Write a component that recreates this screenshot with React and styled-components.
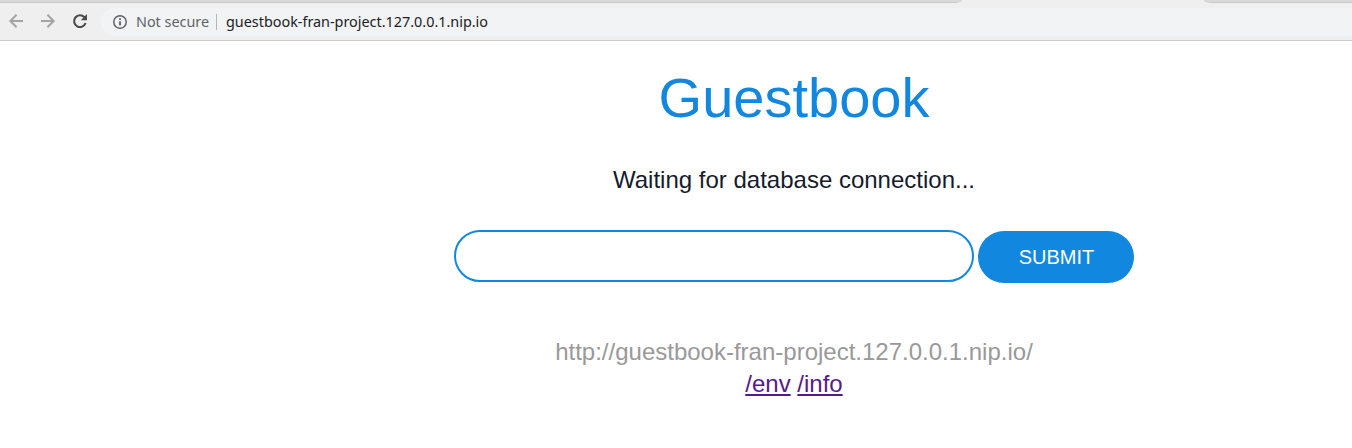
import React from "react";
import styled, { createGlobalStyle } from "styled-components";

const GlobalStyle = createGlobalStyle`
  *, *::before, *::after { box-sizing: border-box; }
  body { margin: 0; background: #fff; overflow: hidden; }
`;

/* The browser window is wider than the visible viewport. */
const Viewport = styled.div`
  width: 100%;
  height: 448px;
  overflow: hidden;
`;

const Window = styled.div`
  width: 1588px;
  font-family: "Liberation Sans", Arial, sans-serif;
`;

const TabStrip = styled.div`
  display: flex;
  height: 3px;
  background: #efefef;
`;

const InactiveTabs = styled.div`
  width: ${(p) => p.$width};
  flex: ${(p) => (p.$width ? "none" : 1)};
  background: #d9d9d9;
  border-bottom: 1px solid #c9c9c9;
  border-radius: ${(p) => (p.$side === "left" ? "0 0 8px 0 / 0 0 3px 0" : "0 0 0 8px / 0 0 0 3px")};
`;

const ActiveTab = styled.div`
  width: 242px;
`;

const Toolbar = styled.div`
  display: flex;
  align-items: flex-start;
  height: 38px;
  padding: 5px 0 0 8px;
  background: #efefef;
  border-bottom: 1px solid #cacaca;
`;

const NavButton = styled.span`
  display: flex;
  width: 16px;
  height: 16px;
  margin: 5px 16px 0 0;
  color: ${(p) => (p.$enabled ? "#4b4b4b" : "#a5a5a5")};
`;

const AddressBar = styled.div`
  display: flex;
  align-items: center;
  flex: 1;
  height: 28px;
  margin-left: -3px;
  padding-left: 11px;
  border-radius: 14px 0 0 14px;
  background: #f1f3f4;
  font: 14.38px/20px "Noto Sans", sans-serif;
  white-space: nowrap;
`;

const Security = styled.span`
  display: flex;
  align-items: center;
  width: 105px;
  height: 16px;
  border-right: 1px solid #b4b7ba;
  color: #5f6368;
`;

const SecurityIcon = styled.svg`
  flex: none;
  width: 16px;
  height: 16px;
  margin-right: 8px;
`;

const Url = styled.span`
  margin-left: 9px;
  color: #202124;
`;

const Page = styled.main`
  display: flex;
  flex-direction: column;
  align-items: center;
  color: #151b2d;
  font-size: 24px;
  line-height: 32px;
`;

const Title = styled.h1`
  margin: 25px 0 0;
  color: #1287e0;
  font-size: 56px;
  font-weight: 400;
  line-height: 64px;
`;

const Status = styled.p`
  margin: 34px 0 0;
`;

const Form = styled.form`
  display: flex;
  align-items: flex-start;
  gap: 4px;
  margin-top: 34px;
`;

const EntryInput = styled.input`
  width: 520px;
  height: 52px;
  padding: 0 24px;
  border: 2px solid #1287e0;
  border-radius: 26px;
  background: #fff;
  font: inherit;
  outline: none;
`;

const SubmitButton = styled.button`
  width: 156px;
  height: 52px;
  margin-top: 1px;
  padding: 0 0 0 1px;
  border: 0;
  border-radius: 26px;
  background: #1287e0;
  color: #fff;
  font: 20px/52px "Liberation Sans", Arial, sans-serif;
`;

const HostAddress = styled.p`
  margin: 53px 0 0;
  color: #999;
`;

const Links = styled.p`
  margin: 0;
`;

const PageLink = styled.a`
  color: #551a8b;
  text-decoration: underline;
`;

const ArrowIcon = ({ d }) => (
  <svg width="16" height="16" viewBox="0 0 16 16" fill="none" stroke="currentColor" strokeWidth="2" aria-hidden="true">
    <path d={d} />
  </svg>
);

const ReloadIcon = () => (
  <svg width="16" height="16" viewBox="0 0 16 16" aria-hidden="true">
    <path d="M12.4 4.2A5.9 5.9 0 1 0 13.6 10" fill="none" stroke="currentColor" strokeWidth="2.1" />
    <path d="M15 1v6.2H8.8z" fill="currentColor" />
  </svg>
);

const InfoIcon = () => (
  <SecurityIcon viewBox="0 0 16 16" aria-hidden="true">
    <circle cx="8" cy="8" r="6.25" fill="none" stroke="currentColor" strokeWidth="1.5" />
    <path d="M7.1 4.3h1.8v1.8H7.1zM7.1 7.2h1.8v4.4H7.1z" fill="currentColor" />
  </SecurityIcon>
);

export default function App() {
  return (
    <Viewport>
      <GlobalStyle />
      <Window>
        <TabStrip>
          <InactiveTabs $side="left" $width="962px" />
          <ActiveTab />
          <InactiveTabs $side="right" />
        </TabStrip>
        <Toolbar>
          <NavButton><ArrowIcon d="M15 8H2.5M8.6 1.7L2.3 8l6.3 6.3" /></NavButton>
          <NavButton><ArrowIcon d="M1 8h12.5M7.4 1.7L13.7 8l-6.3 6.3" /></NavButton>
          <NavButton $enabled><ReloadIcon /></NavButton>
          <AddressBar>
            <Security>
              <InfoIcon />
              Not secure
            </Security>
            <Url>guestbook-fran-project.127.0.0.1.nip.io</Url>
          </AddressBar>
        </Toolbar>
        <Page>
          <Title>Guestbook</Title>
          <Status>Waiting for database connection...</Status>
          <Form onSubmit={(e) => e.preventDefault()}>
            <EntryInput aria-label="Message" />
            <SubmitButton type="submit">SUBMIT</SubmitButton>
          </Form>
          <HostAddress>http://guestbook-fran-project.127.0.0.1.nip.io/</HostAddress>
          <Links>
            <PageLink href="#env">/env</PageLink> <PageLink href="#info">/info</PageLink>
          </Links>
        </Page>
      </Window>
    </Viewport>
  );
}
